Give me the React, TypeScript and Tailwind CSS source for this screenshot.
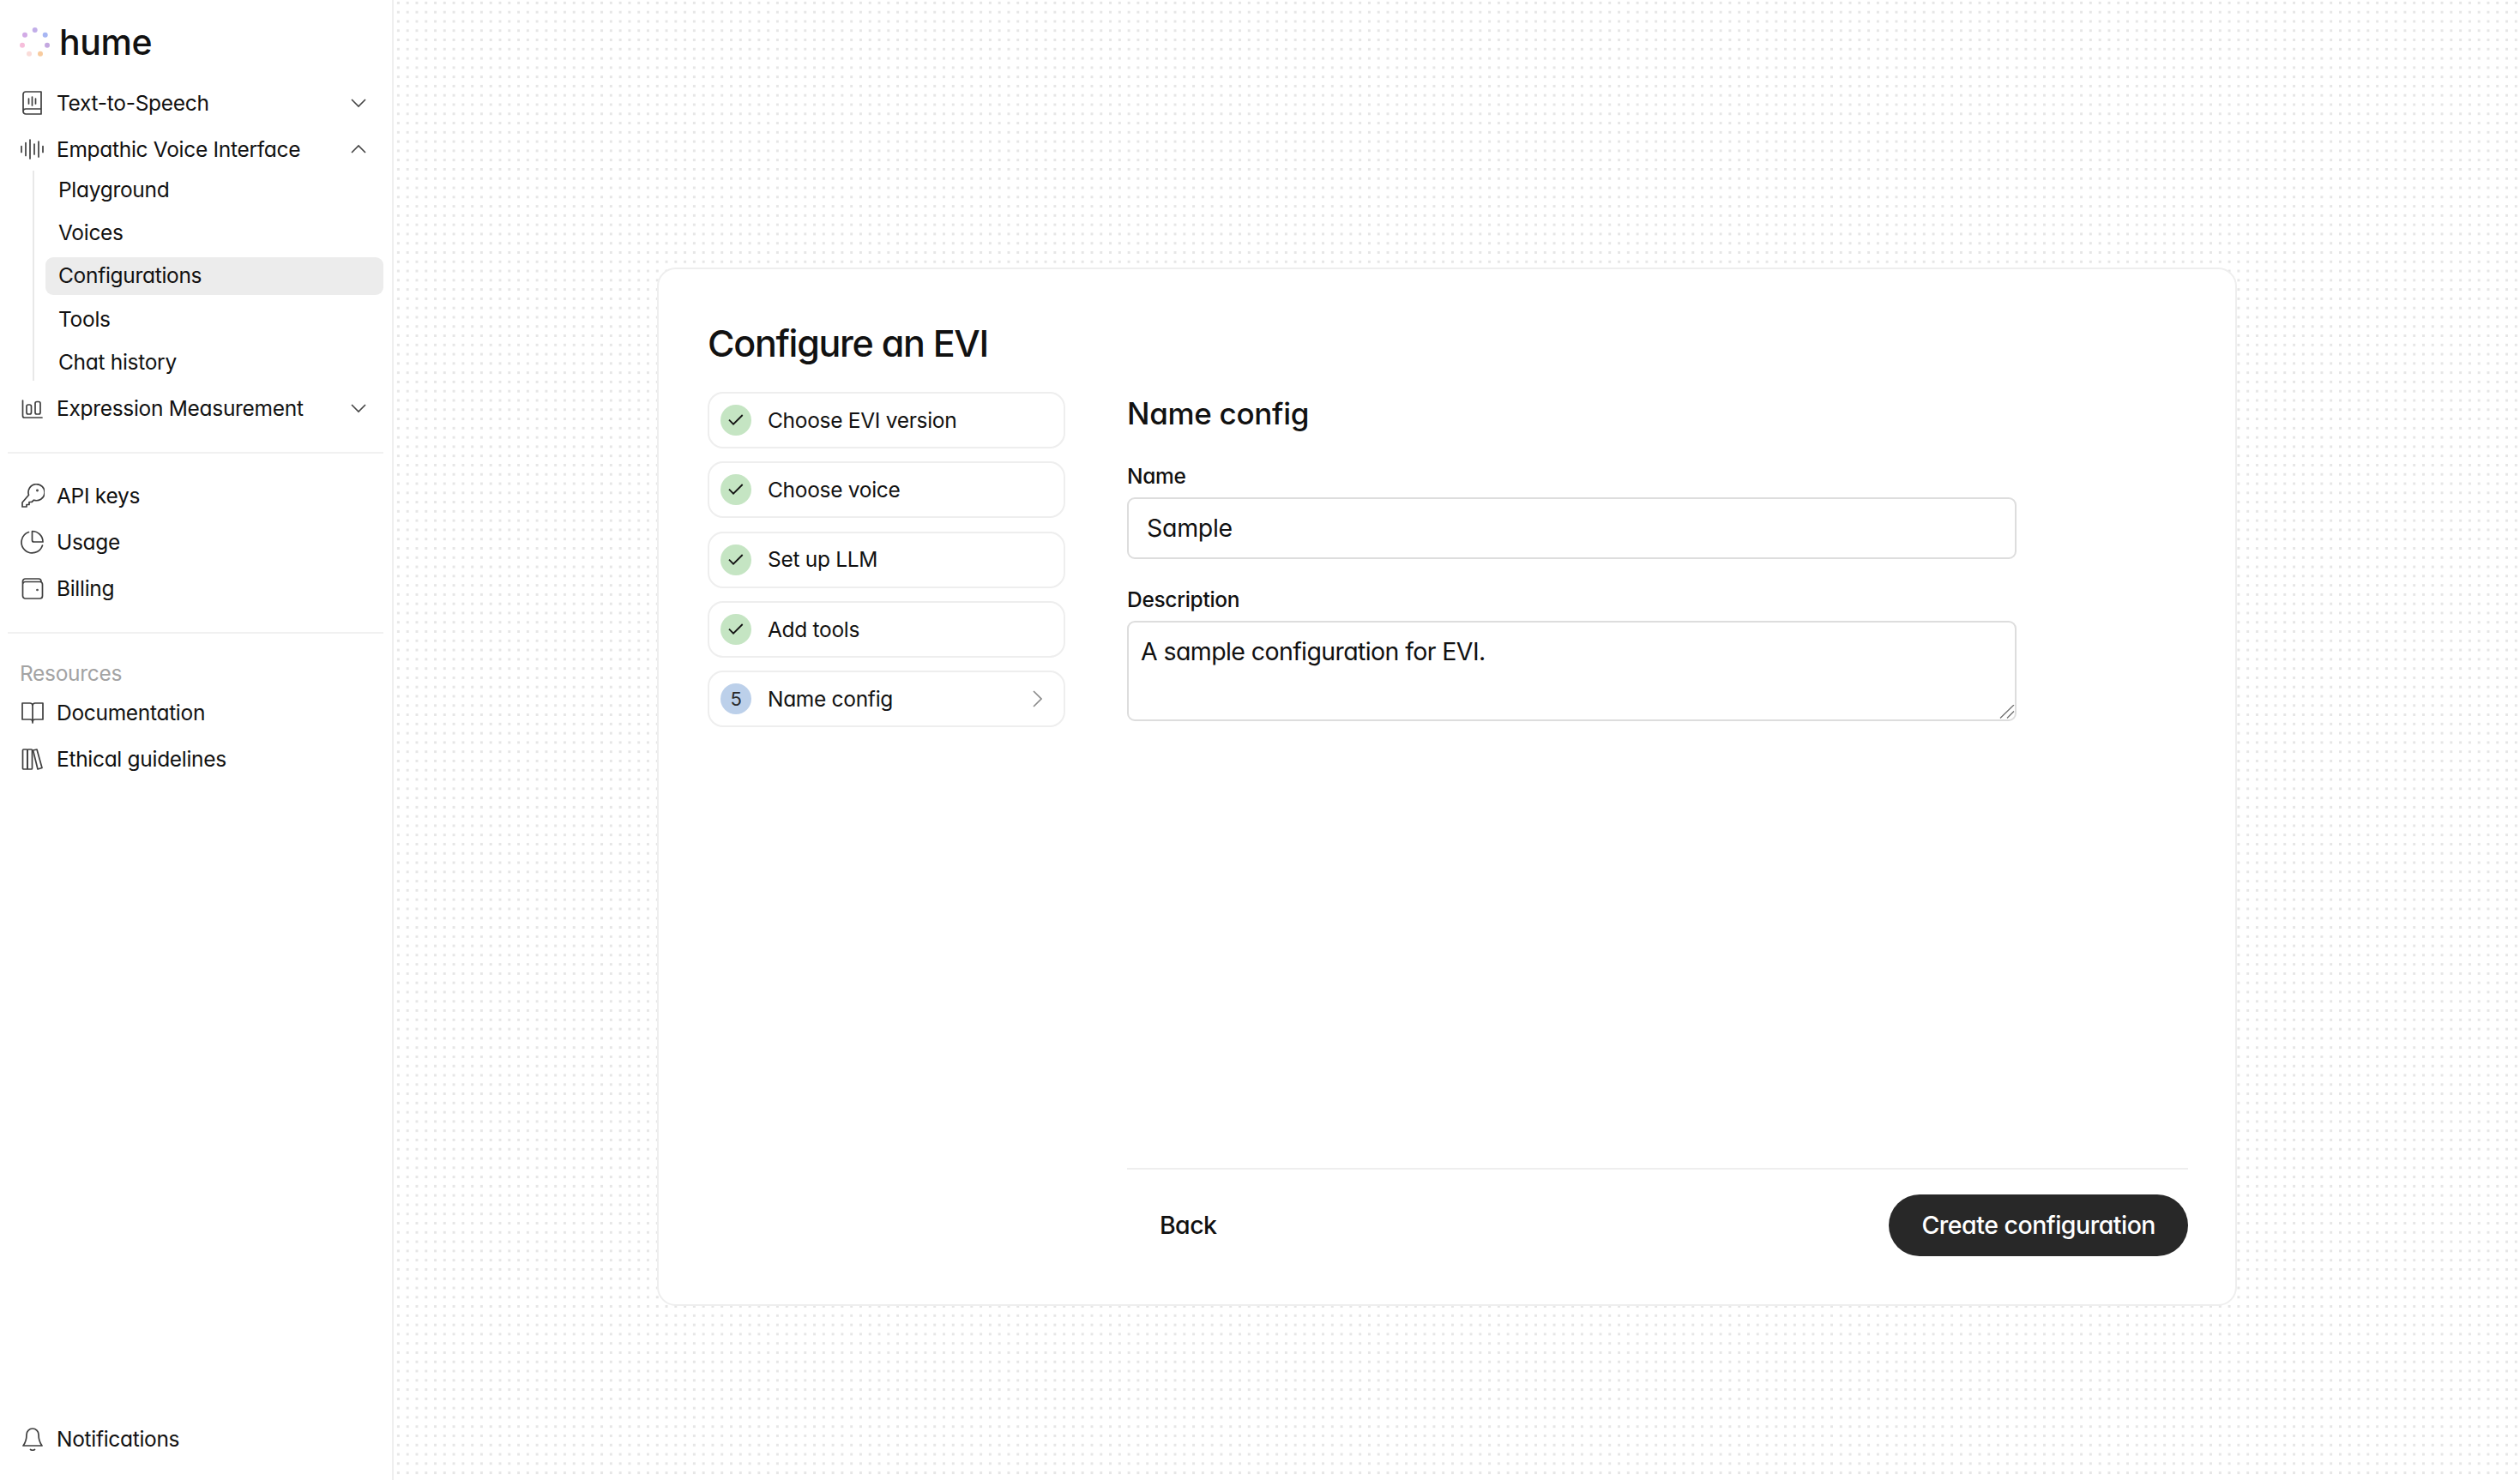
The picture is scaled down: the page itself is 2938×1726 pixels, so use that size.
import type { ReactNode } from 'react'

const iconClass = 'h-[28px] w-[28px] shrink-0 fill-none stroke-[#3f3f3f] stroke-[1.7]'

function Icon({ children }: { children: ReactNode }) {
  return (
    <svg viewBox="0 0 28 28" className={iconClass} strokeLinecap="round" strokeLinejoin="round">
      {children}
    </svg>
  )
}

const TtsIcon = () => (
  <Icon>
    <path d="M3 24V4a3 3 0 0 1 3-3h18v26H6a3 3 0 0 1-3-3 3 3 0 0 1 3-3h18" />
    <path d="M9.5 9v6M13.5 7v10M17.5 9v6" />
  </Icon>
)
const WaveIcon = () => (
  <Icon>
    <path d="M1 10.5v7M6 6.5v15M11 3v22M16 8v12M21 5v18M26 10.5v7" />
  </Icon>
)
const ChartIcon = () => (
  <Icon>
    <path d="M2.5 5v18a2 2 0 0 0 2 2H25" />
    <rect x="7" y="10" width="5.5" height="11" rx="2" />
    <rect x="17" y="6.5" width="6" height="14.5" rx="2" />
  </Icon>
)
const KeyIcon = () => (
  <Icon>
    <path d="M9.5 13.2a9.5 9.5 0 1 1 6 6L13 21.5h-3v3H7V27H2v-5z" />
    <circle cx="19.5" cy="8" r="0.6" />
  </Icon>
)
const PieIcon = () => (
  <Icon>
    <path d="M9.5 2.5A12.5 12.5 0 1 0 25.5 18" />
    <path d="M13.5 1.5a12.5 12.5 0 0 1 12.5 12.5H15.5a2 2 0 0 1-2-2z" />
  </Icon>
)
const WalletIcon = () => (
  <Icon>
    <rect x="2.5" y="6.5" width="23" height="19.5" rx="3" />
    <path d="M2.5 8V6a3 3 0 0 1 3-3H21a3 3 0 0 1 3 3" />
    <circle cx="19.5" cy="16" r="0.5" />
  </Icon>
)
const BookOpenIcon = () => (
  <Icon>
    <path d="M14 26V6a3 3 0 0 0-3-3H2v19h9a3 3 0 0 1 3 3 3 3 0 0 1 3-3h9V3h-9a3 3 0 0 0-3 3" />
  </Icon>
)
const LibraryIcon = () => (
  <Icon>
    <rect x="2.5" y="3" width="5.5" height="23" rx="1" />
    <rect x="8" y="3" width="5.5" height="23" rx="1" />
    <path d="M14.5 4l4.5-1 6 21.5-5 1.5z" />
  </Icon>
)
const BellIcon = () => (
  <Icon>
    <path d="M14 2a7 7 0 0 0-7 7c0 6-1 9-4 13h22c-3-4-4-7-4-13a7 7 0 0 0-7-7z" />
    <path d="M11.5 26.5q2.500 1.500 5 0" />
  </Icon>
)

function Chevron({ up }: { up?: boolean }) {
  return (
    <svg viewBox="0 0 20 12" className="h-[12px] w-[20px] fill-none stroke-[#444444] stroke-[1.6]">
      <path d={up ? 'M2 10l8-8 8 8' : 'M2 2l8 8 8-8'} />
    </svg>
  )
}

function Logo() {
  return (
    <div className="flex h-[93px] items-center pt-[5px] pl-[15px]">
      <svg viewBox="0 0 36 36" className="h-[36px] w-[36px] -ml-[2px]">
        <circle cx="18.700" cy="4" r="3" fill="#c2aee9" />
        <circle cx="30.700" cy="9.700" r="3" fill="#a7b6f3" />
        <circle cx="33" cy="21.700" r="3" fill="#c4a8e0" />
        <circle cx="25" cy="31.700" r="3" fill="#f8cb9e" />
        <circle cx="12" cy="31.700" r="3" fill="#fadcd9" />
        <circle cx="4" cy="21.700" r="3" fill="#f6bedb" />
        <circle cx="7" cy="9.700" r="3" fill="#d2abe6" />
      </svg>
      <span className="ml-[11px] text-[41px] leading-none font-medium tracking-[-0.4px] text-[#111111]">hume</span>
    </div>
  )
}

function NavRow({ icon, label, chevron }: { icon: ReactNode; label: string; chevron?: 'up' | 'down' }) {
  return (
    <div className="flex h-[54px] items-center justify-between pr-[19px] pl-[15px]">
      <div className="flex items-center gap-[14px]">
        {icon}
        <span className="text-[24.500px] text-[#111111]">{label}</span>
      </div>
      {chevron && <Chevron up={chevron === 'up'} />}
    </div>
  )
}

const subItems = ['Playground', 'Voices', 'Configurations', 'Tools', 'Chat history']

function Sidebar() {
  return (
    <aside className="flex h-full w-[459px] shrink-0 flex-col border-r-2 border-[#efefef] bg-white pr-[10px] pl-[9px]">
      <Logo />
      <NavRow icon={<TtsIcon />} label="Text-to-Speech" chevron="down" />
      <NavRow icon={<WaveIcon />} label="Empathic Voice Interface" chevron="up" />
      <div className="-mt-[2px] ml-[29px] flex flex-col gap-[6.300px] border-l-2 border-[#e8e8e8] pl-[13px]">
        {subItems.map((item) => (
          <div
            key={item}
            className={`flex h-[44px] items-center rounded-[9px] px-[15px] text-[24.500px] text-[#111111] ${
              item === 'Configurations' ? 'bg-[#ececec]' : ''
            }`}
          >
            {item}
          </div>
        ))}
      </div>
      <div className="mt-[5px]">
        <NavRow icon={<ChartIcon />} label="Expression Measurement" chevron="down" />
      </div>
      <div className="mt-[24px] border-t-2 border-[#f1f1f1]" />
      <div className="mt-[22px]">
        <NavRow icon={<KeyIcon />} label="API keys" />
        <NavRow icon={<PieIcon />} label="Usage" />
        <NavRow icon={<WalletIcon />} label="Billing" />
      </div>
      <div className="mt-[24px] border-t-2 border-[#f1f1f1]" />
      <div className="mt-[31px] mb-[4px] h-[30px] pl-[14px] text-[24.500px] leading-[30px] text-[#a3a3a3]">Resources</div>
      <NavRow icon={<BookOpenIcon />} label="Documentation" />
      <NavRow icon={<LibraryIcon />} label="Ethical guidelines" />
      <div className="mt-auto pb-[21px]">
        <NavRow icon={<BellIcon />} label="Notifications" />
      </div>
    </aside>
  )
}

const steps = ['Choose EVI version', 'Choose voice', 'Set up LLM', 'Add tools']

function StepRow({ label, index }: { label: string; index?: number }) {
  return (
    <div className="flex h-[66px] items-center rounded-[18px] border-2 border-[#eeeeee] pr-[25px] pl-[13px]">
      {index ? (
        <span className="flex h-[36px] w-[36px] shrink-0 items-center justify-center rounded-full bg-[#bcd0ea] text-[22px] text-[#2a2a2a]">
          {index}
        </span>
      ) : (
        <svg viewBox="0 0 36 36" className="h-[36px] w-[36px] shrink-0">
          <circle cx="18" cy="18" r="18" fill="#c5e5c3" />
          <path d="M10 17.700l5 5L25.700 12" fill="none" stroke="#141414" strokeWidth="1.800" />
        </svg>
      )}
      <span className="ml-[19px] text-[24.500px] text-[#111111]">{label}</span>
      {index && (
        <svg viewBox="0 0 12 20" className="ml-auto h-[20px] w-[12px] fill-none stroke-[#8a8a8a] stroke-[1.600]">
          <path d="M2 1l9 9-9 9" />
        </svg>
      )}
    </div>
  )
}

function NameForm() {
  return (
    <div className="flex flex-1 flex-col">
      <h2 className="mt-[3px] text-[35px] leading-[44px] font-medium text-[#111111]">Name config</h2>
      <label className="mt-[36px] block h-[30px] text-[24.500px] leading-[30px] font-medium text-[#111111]">Name</label>
      <input
        readOnly
        value="Sample"
        className="mt-[10px] h-[72px] w-[1037px] rounded-[9px] border-2 border-[#dddddd] bg-white px-[21px] pb-[2px] text-[28.500px] text-[#111111] outline-none"
      />
      <label className="mt-[32px] block h-[30px] text-[24.500px] leading-[30px] font-medium text-[#111111]">
        Description
      </label>
      <div className="relative mt-[10px] h-[117px] w-[1037px]">
        <textarea
          readOnly
          value="A sample configuration for EVI."
          className="h-full w-full resize-none rounded-[9px] border-2 border-[#dddddd] bg-white px-[14px] py-[17px] text-[28.500px] leading-[34px] tracking-[-0.6px] text-[#111111] outline-none"
        />
        <svg viewBox="0 0 18 16" className="pointer-events-none absolute right-[2px] bottom-[3px] h-[16px] w-[18px] fill-none stroke-[#6f6f6f] stroke-[1.3]">
          <path d="M17 0L1 15.500M17 7.500L9 15.500" />
        </svg>
      </div>
      <div className="mt-auto flex items-center justify-between border-t-2 border-[#eeeeee] pt-[29px]">
        <button className="px-[38px] text-[28.500px] font-medium tracking-[-0.6px] text-[#111111]">Back</button>
        <button className="flex h-[72px] items-center rounded-full bg-[#282828] px-[38px] text-[28.500px] font-medium tracking-[-0.5px] text-white">
          Create configuration
        </button>
      </div>
    </div>
  )
}

export default function App() {
  return (
    <div
      className="flex h-[1726px] w-[2938px] overflow-hidden bg-white font-['Inter','Liberation_Sans',sans-serif] tracking-[-0.3px] [font-feature-settings:'cv11']"
    >
      <Sidebar />
      <main className="flex-1 bg-[radial-gradient(circle,#e6e6e6_1.500px,transparent_1.800px)] bg-[size:10.795px_10.795px] bg-[position:0px_-2px] pt-[312px] pl-[307px]">
        <div className="flex h-[1211px] w-[1842px] flex-col rounded-[22px] border-2 border-[#eeeeee] bg-white pt-[59px] pr-[55px] pb-[56px] pl-[57px]">
          <h1 className="h-[54px] text-[43px] leading-[54px] font-medium tracking-[-1.300px] text-[#111111]">Configure an EVI</h1>
          <div className="mt-[30px] flex flex-1 gap-[72px]">
            <div className="flex w-[417px] shrink-0 flex-col gap-[15.300px]">
              {steps.map((step) => (
                <StepRow key={step} label={step} />
              ))}
              <StepRow label="Name config" index={5} />
            </div>
            <NameForm />
          </div>
        </div>
      </main>
    </div>
  )
}
